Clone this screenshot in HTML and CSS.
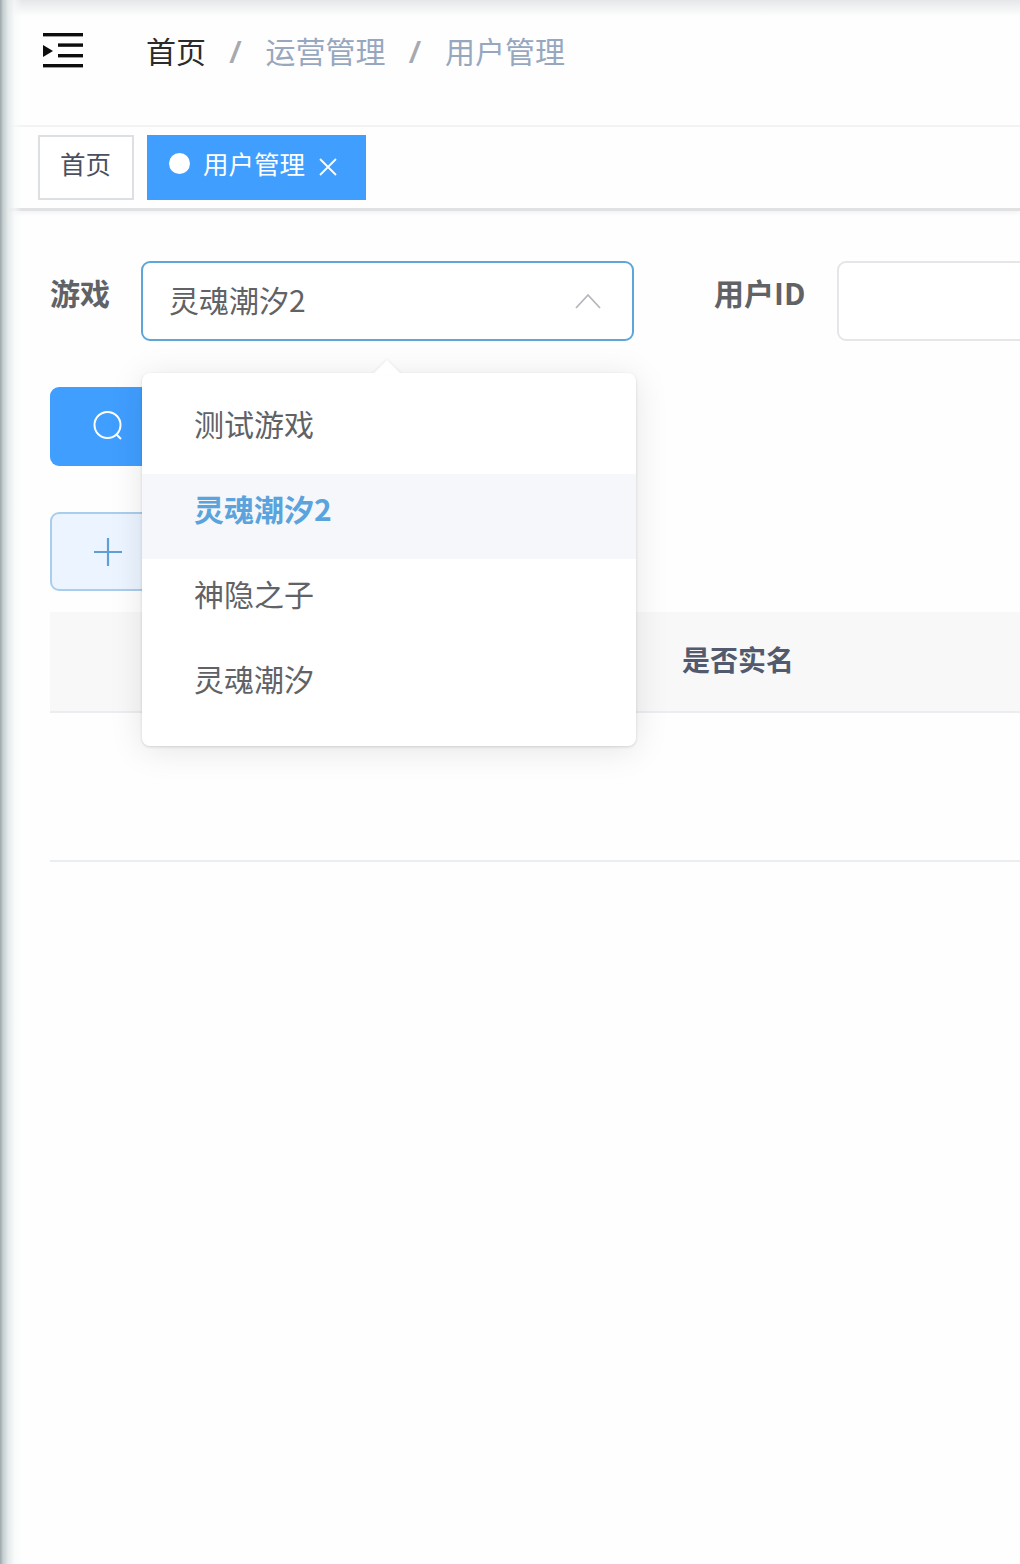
FILE: index.html
```html
<!DOCTYPE html>
<html lang="zh-CN">
<head>
<meta charset="utf-8">
<title>用户管理</title>
<link rel="stylesheet" href="styles.css">
</head>
<body>
<div class="app">
  <header class="navbar">
    <svg class="hamburger" viewBox="0 0 40 36" width="40" height="36" aria-hidden="true">
      <rect x="0" y="0" width="40" height="3.4" fill="#0d0d0d"/>
      <rect x="15" y="10.4" width="25" height="3.4" fill="#0d0d0d"/>
      <rect x="15" y="21" width="25" height="3.4" fill="#0d0d0d"/>
      <rect x="0" y="31" width="40" height="3.4" fill="#0d0d0d"/>
      <path d="M0 12 L10 18 L0 24 Z" fill="#0d0d0d"/>
    </svg>
    <nav class="breadcrumb">
      <span class="crumb-home">首页</span>
      <span class="crumb-sep">/</span>
      <span class="crumb">运营管理</span>
      <span class="crumb-sep">/</span>
      <span class="crumb">用户管理</span>
    </nav>
  </header>
  <div class="tags">
    <span class="tag">首页</span>
    <span class="tag tag-active">
      <i class="tag-dot"></i>用户管理
      <svg class="tag-close" viewBox="0 0 20 20" width="20" height="20" aria-hidden="true"><path d="M2 2 L18 18 M18 2 L2 18" stroke="#fff" stroke-width="1.8" fill="none"/></svg>
    </span>
  </div>
  <main class="content">
    <div class="filter-row">
      <label class="filter-label">游戏</label>
      <div class="select">
        <span>灵魂潮汐2</span>
        <svg class="chevron" viewBox="0 0 26 16" width="26" height="16" aria-hidden="true"><path d="M1 15 L13 2 L25 15" stroke="#b4b7bd" stroke-width="1.8" fill="none"/></svg>
      </div>
      <label class="filter-label filter-label-id">用户ID</label>
      <div class="input"></div>
    </div>
    <button class="btn btn-search" type="button">
      <svg viewBox="0 0 32 32" width="32" height="32" aria-hidden="true"><circle cx="15.5" cy="15" r="13" stroke="#fff" stroke-width="2" fill="none"/><path d="M24 24 L29 29" stroke="#fff" stroke-width="2"/></svg>
    </button>
    <button class="btn btn-add" type="button">
      <svg viewBox="0 0 30 30" width="30" height="30" aria-hidden="true"><path d="M15 1 V29 M1 15 H29" stroke="#5f9fd6" stroke-width="2.2" fill="none"/></svg>
    </button>
    <div class="table">
      <div class="table-head"><span class="th">是否实名</span></div>
      <div class="table-row"></div>
    </div>
    <div class="dropdown">
      <span class="dropdown-arrow"></span>
      <ul class="options">
        <li class="option">测试游戏</li>
        <li class="option option-selected">灵魂潮汐2</li>
        <li class="option">神隐之子</li>
        <li class="option">灵魂潮汐</li>
      </ul>
    </div>
  </main>
  <div class="edge-top"></div>
  <div class="edge-left"></div>
</div>
</body>
</html>
```
FILE: styles.css
```css
* { box-sizing: border-box; }
html, body { margin: 0; padding: 0; background: #fff; }
body { font-family: "Noto Sans CJK SC", "Liberation Sans", sans-serif; }
.app { position: relative; width: 1020px; height: 1564px; overflow: hidden; background: #fefefe; }

.navbar { display: flex; align-items: flex-start; height: 127px; padding: 33px 0 0 43px; border-bottom: 2px solid #f2f3f4; }
.hamburger { flex: none; }
.breadcrumb { display: flex; align-items: flex-start; margin-left: 63px; font-size: 30px; line-height: 34px; }
.crumb-home { color: #2b2b2b; }
.crumb { color: #97a8be; }
.crumb-sep { width: 59.5px; padding: 3px 2px 0 0; text-align: center; color: #a6a9ad; font-weight: 700; font-family: "Liberation Sans", sans-serif; font-style: italic; }

.tags { display: flex; align-items: flex-start; gap: 13px; height: 84px; padding: 8px 0 0 38px; border-bottom: 3px solid #dfe1e3; box-shadow: 0 2px 4px rgba(0,0,0,.05); }
.tag { display: flex; align-items: center; height: 65px; padding: 0 21px 9px 20px; border: 2px solid #dcdfe4; background: #fff; color: #495060; font-size: 25.5px; line-height: 1; }
.tag-active { padding: 0 28px 9px 22px; border: none; background: #409eff; color: #fff; }
.tag-dot { width: 21px; height: 21px; margin: 0 13px 0 0; border-radius: 50%; background: #fff; }
.tag-close { margin: 8px 0 0 13px; }

.content { position: relative; padding: 50px 0 0 50px; }
.filter-row { display: flex; align-items: flex-start; height: 78px; }
.filter-label { flex: none; width: 91px; font-size: 30px; font-weight: 700; line-height: 62px; color: #606266; }
.select { flex: none; display: flex; align-items: center; justify-content: space-between; width: 493px; height: 80px; padding: 0 31px 4px 26px; border: 2.5px solid #5ea5d8; border-radius: 9px; background: #fff; font-size: 30px; color: #606266; }
.chevron { flex: none; margin-top: 4px; }
.filter-label-id { width: 123px; margin-left: 80px; }
.input { flex: none; width: 300px; height: 80px; border: 2px solid #e4e6e9; border-radius: 9px; background: #fff; }

.btn { display: flex; align-items: center; justify-content: center; width: 115px; padding: 0; border-radius: 9px; }
.btn-search { height: 79px; margin-top: 48px; border: none; background: #409eff; }
.btn-search svg { margin-bottom: 2px; }
.btn-add { height: 79px; margin-top: 46px; border: 2px solid #a9cdec; background: #ecf5ff; }

.table { margin-top: 21px; }
.table-head { display: flex; align-items: center; height: 101px; padding: 0 0 6px 632px; background: #f8f8f9; border-bottom: 2px solid #ebedf0; }
.th { font-size: 28px; font-weight: 700; color: #515a6e; }
.table-row { height: 149px; border-bottom: 2px solid #ebeef1; }

.dropdown { position: absolute; left: 142px; top: 162px; width: 494px; height: 373px; padding: 16px 0; border-radius: 8px; background: #fff; box-shadow: 0 1px 3px rgba(0,0,0,.14), 0 4px 34px rgba(0,0,0,.1); }
.dropdown-arrow { position: absolute; left: 231px; top: -13px; width: 0; height: 0; border-left: 14px solid transparent; border-right: 14px solid transparent; border-bottom: 14px solid #fff; filter: drop-shadow(0 -1px 1px rgba(0,0,0,.06)); }
.options { margin: 0; padding: 0; list-style: none; }
.option { height: 85px; padding-left: 52px; font-size: 30px; line-height: 69px; color: #606266; }
.option-selected { background: #f5f7fa; color: #5aa3dc; font-weight: 700; }

.edge-top { position: absolute; left: 0; top: 0; width: 100%; height: 16px; background: linear-gradient(to bottom, #e6e7e8, rgba(255,255,255,0)); pointer-events: none; }
.edge-left { position: absolute; left: 0; top: 0; width: 22px; height: 100%; background: linear-gradient(to right, #9aa6aa, #c6ced0 14%, #e4e9ea 36%, rgba(246,248,249,.7) 65%, rgba(255,255,255,0)); pointer-events: none; }
```
